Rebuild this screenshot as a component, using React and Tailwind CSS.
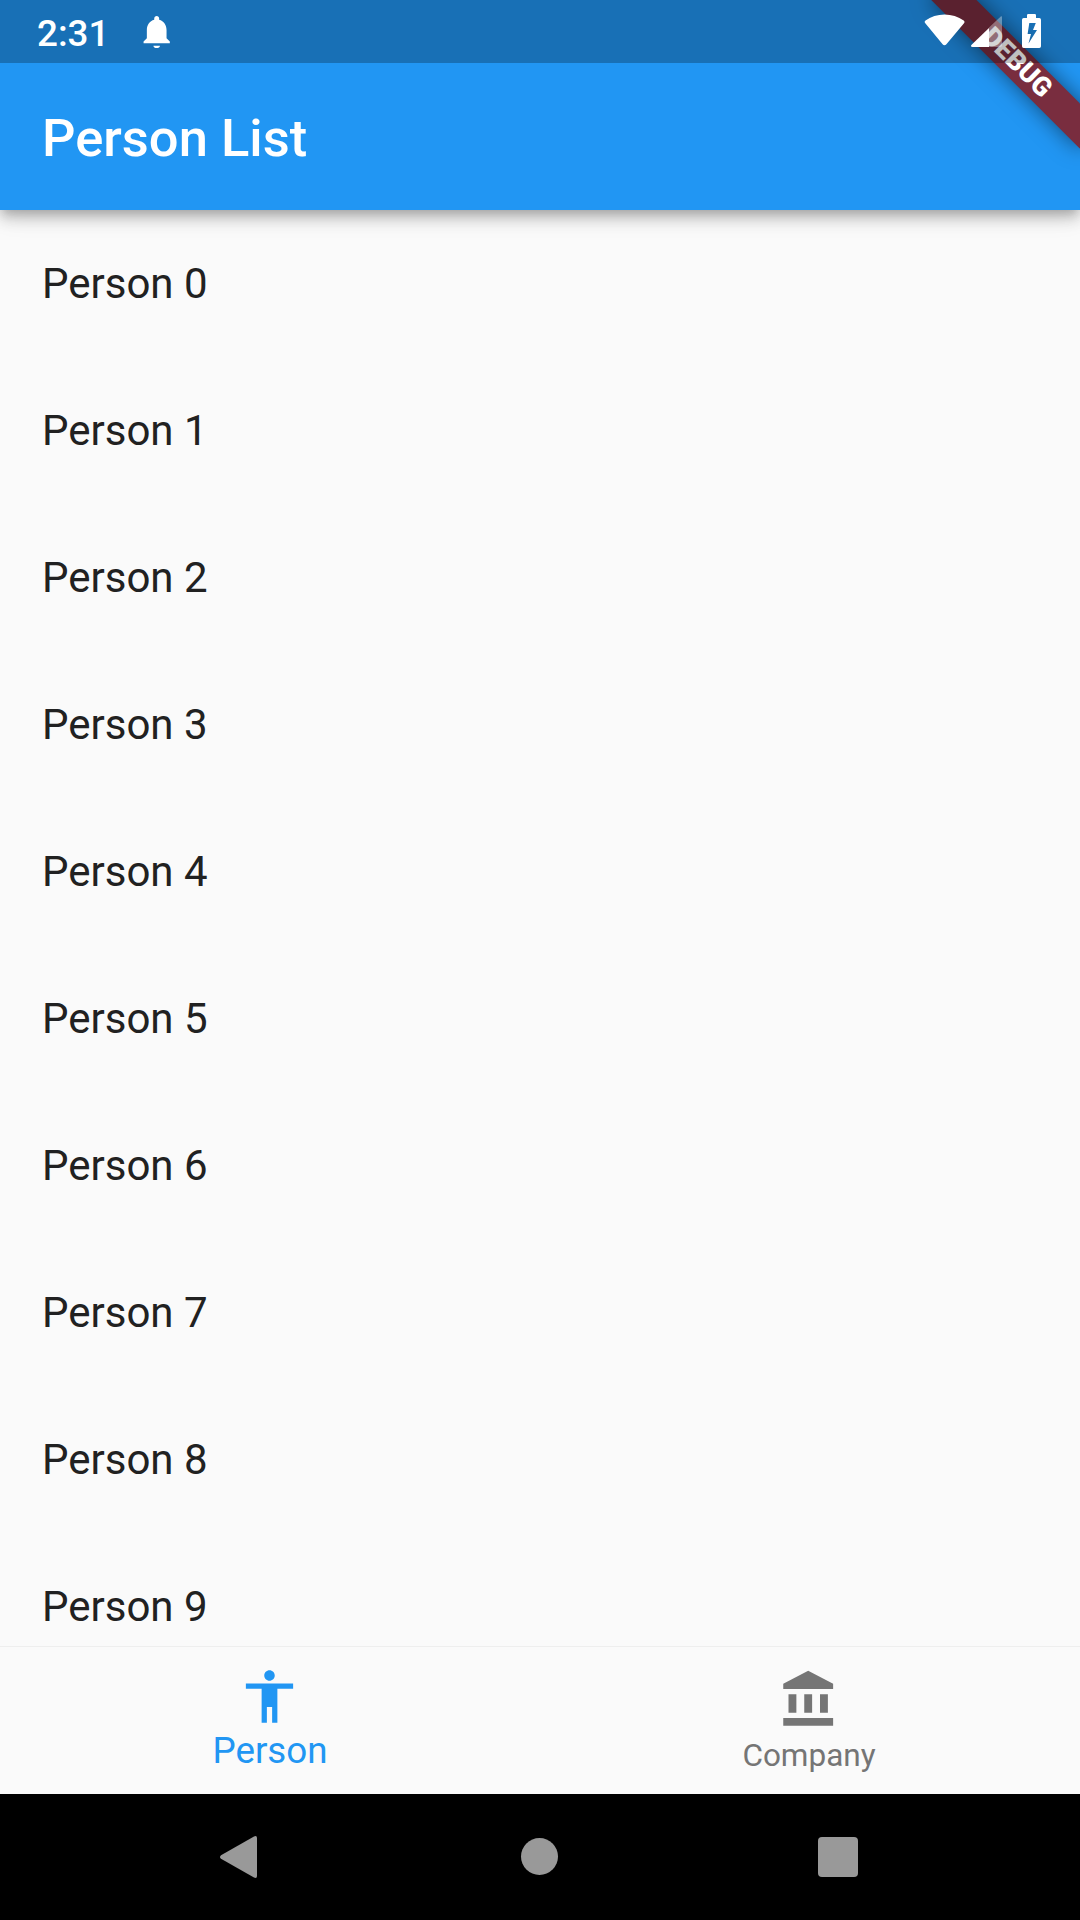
import React from "react";

const people = Array.from({ length: 10 }, (_, i) => `Person ${i}`);

function StatusBar() {
  return (
    <div className="absolute inset-x-0 top-0 z-20 flex h-[63px] items-start bg-black/25 text-white">
      <span className="ml-[37px] mt-[12px] text-[36.75px] font-medium leading-[43px]">2:31</span>
      <svg className="absolute left-[137.4px] top-[12px] h-[39.4px] w-[39.4px]" viewBox="0 0 24 24" fill="currentColor">
        <path d="M12 22c1.1 0 2-.7 2-1.5h-4c0 .8.9 1.5 2 1.5zm6-6v-5c0-3.07-1.64-5.64-4.5-6.32V4c0-.83-.67-1.5-1.5-1.5s-1.5.67-1.5 1.5v.68C7.63 5.36 6 7.92 6 11v5l-2 2v1h16v-1l-2-2z" />
      </svg>
      <svg className="absolute left-[924px] top-[12px] h-[36px] w-[120px]" viewBox="924 12 120 36" fill="currentColor">
        <path d="M925.3 23.2C924.4 22.3 924.4 21.2 925.5 20.4C936 12.4 953 12.4 963.7 20.4C964.7 21.2 964.8 22.3 964 23.2L946.4 44.3C945.3 45.6 943.7 45.6 942.6 44.3Z" />
        <path opacity=".35" d="M989 27.5L1000.5 16.7C1001.5 15.8 1002 16.2 1002 17.3V45.2Q1002 47 1000 47H989Z" />
        <path d="M989 28V47H972.5C970.8 47 970.5 45.8 971.6 44.7Z" />
        <path fillRule="evenodd" d="M1027 18V15.2Q1027 14 1028.2 14H1034.8Q1036 14 1036 15.2V18H1039.3Q1041 18 1041 19.7V46.3Q1041 48 1039.3 48H1023.7Q1022 48 1022 46.3V19.7Q1022 18 1023.7 18ZM1029.3 23L1027.6 34H1031L1028.5 43.5L1037 30H1033L1035.8 23Z" />
      </svg>
    </div>
  );
}

function DebugBanner() {
  return (
    <div className="absolute left-[912px] top-[47.4px] z-10 flex h-[31.5px] w-[210px] rotate-45 items-center justify-center bg-[#792d3f] text-[26.8px] font-black leading-none text-white shadow-[0_0_21px_rgba(0,0,0,0.5)]">
      DEBUG
    </div>
  );
}

export default function App() {
  return (
    <div className="relative flex h-[1920px] w-[1080px] flex-col overflow-hidden bg-[#fafafa] font-['Roboto',sans-serif]">
      <StatusBar />
      <DebugBanner />
      <header className="relative flex h-[210px] shrink-0 items-center bg-[#2196f3] px-[42px] pt-[66px] shadow-[0_5px_10px_-3px_rgba(0,0,0,0.2),0_10px_13px_rgba(0,0,0,0.14),0_3px_26px_rgba(0,0,0,0.12)]">
        <h1 className="text-[52.5px] font-medium leading-[62px] text-white">Person List</h1>
      </header>
      <main className="min-h-0 flex-1 overflow-hidden">
        {people.map((name) => (
          <div key={name} className="flex h-[147px] items-center px-[42px] text-[42px] leading-[50px] text-[#212121]">
            {name}
          </div>
        ))}
      </main>
      <nav className="grid h-[148px] shrink-0 grid-cols-2 border-t border-[#eeeeee]">
        <div className="flex flex-col items-center pt-[18px] text-[#2196f3]">
          <svg className="mr-px h-[63px] w-[63px]" viewBox="0 0 24 24" fill="currentColor">
            <path d="M12 2c1.1 0 2 .9 2 2s-.9 2-2 2-2-.9-2-2 .9-2 2-2zm9 7h-6v13h-2v-6h-2v6H9V9H3V7h18v2z" />
          </svg>
          <span className="mt-[1px] text-[36.75px] leading-[43px]">Person</span>
        </div>
        <div className="flex flex-col items-center pr-[2px] pt-[21px] text-[#757575]">
          <svg className="h-[63px] w-[63px]" viewBox="0 0 24 24" fill="currentColor">
            <path d="M4 10v7h3v-7H4zm6 0v7h3v-7h-3zM2 22h19v-3H2v3zm14-12v7h3v-7h-3zm-4.5-9L2 6v2h19V6l-9.5-5z" />
          </svg>
          <span className="mt-[6px] text-[31.5px] leading-[37px]">Company</span>
        </div>
      </nav>
      <footer className="grid h-[126px] shrink-0 grid-cols-[38px_1fr_40px] items-center bg-black pl-[219px] pr-[222px] text-[#999999]">
        <svg className="h-[42px] w-[38px]" viewBox="0 0 38 42" fill="currentColor">
          <path d="M35 .4Q38-.8 38 2V40Q38 42.8 35 41.6L2 22.8Q0 21 2 19.2Z" />
        </svg>
        <div className="mb-px ml-[264px] h-[37px] w-[37px] rounded-full bg-[#999999]" />
        <div className="h-[40px] w-[40px] rounded-[4px] bg-[#999999]" />
      </footer>
    </div>
  );
}
